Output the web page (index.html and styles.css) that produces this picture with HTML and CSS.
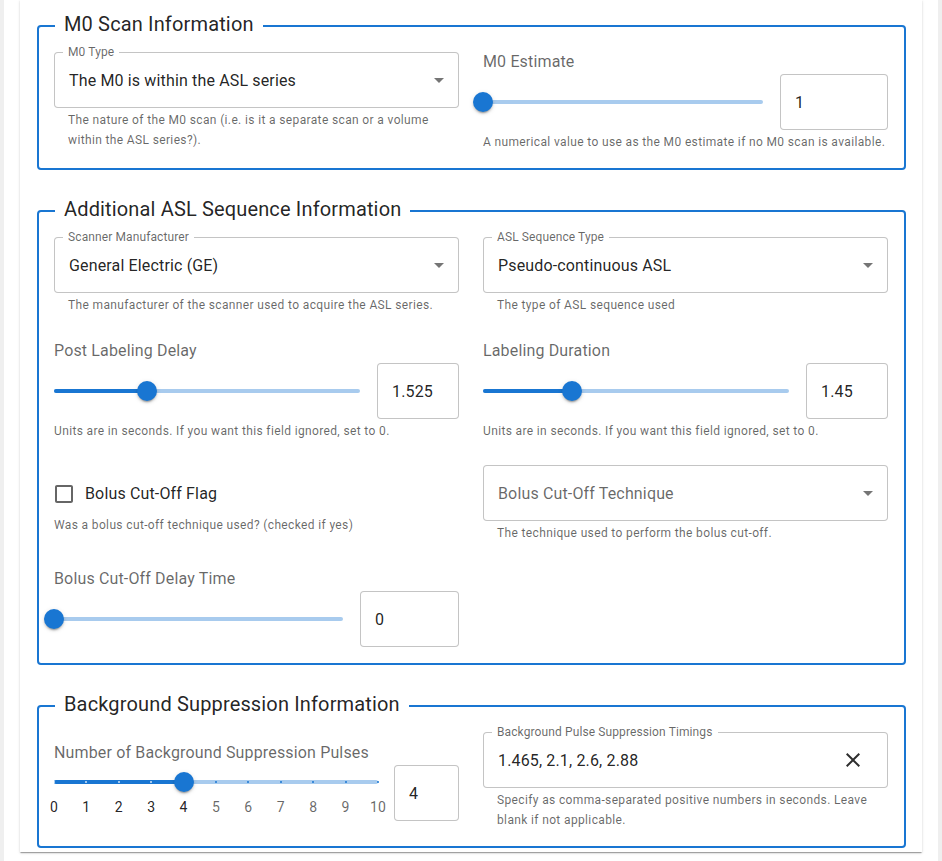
FILE: index.html
```html
<!DOCTYPE html>
<html lang="en">
<head>
<meta charset="utf-8">
<title>ASL Parameters</title>
<link rel="stylesheet" href="styles.css">
</head>
<body>
<div class="viewport">
  <main class="paper">

    <fieldset class="section">
      <legend>M0 Scan Information</legend>
      <div class="grid">
        <div class="col">
          <div class="outlined">
            <span class="float-label">M0 Type</span>
            <span class="value">The M0 is within the ASL series</span>
            <svg class="arrow" viewBox="0 0 24 24"><path d="M7 10l5 5 5-5z"/></svg>
          </div>
          <p class="helper indent">The nature of the M0 scan (i.e. is it a separate scan or a volume within the ASL series?).</p>
        </div>
        <div class="col raise">
          <div class="field-label">M0 Estimate</div>
          <div class="slider-row">
            <div class="slider">
              <div class="rail"></div>
              <div class="track" style="width:0%"></div>
              <div class="thumb" style="left:0%"></div>
            </div>
            <div class="outlined num num-108"><span class="value">1</span></div>
          </div>
          <p class="helper">A numerical value to use as the M0 estimate if no M0 scan is available.</p>
        </div>
      </div>
    </fieldset>

    <fieldset class="section">
      <legend>Additional ASL Sequence Information</legend>
      <div class="grid">
        <div class="col">
          <div class="outlined">
            <span class="float-label">Scanner Manufacturer</span>
            <span class="value">General Electric (GE)</span>
            <svg class="arrow" viewBox="0 0 24 24"><path d="M7 10l5 5 5-5z"/></svg>
          </div>
          <p class="helper indent">The manufacturer of the scanner used to acquire the ASL series.</p>
        </div>
        <div class="col">
          <div class="outlined">
            <span class="float-label">ASL Sequence Type</span>
            <span class="value">Pseudo-continuous ASL</span>
            <svg class="arrow" viewBox="0 0 24 24"><path d="M7 10l5 5 5-5z"/></svg>
          </div>
          <p class="helper indent">The type of ASL sequence used</p>
        </div>

        <div class="col">
          <div class="field-label">Post Labeling Delay</div>
          <div class="slider-row">
            <div class="slider">
              <div class="rail"></div>
              <div class="track" style="width:30.5%"></div>
              <div class="thumb" style="left:30.5%"></div>
            </div>
            <div class="outlined num num-82"><span class="value">1.525</span></div>
          </div>
          <p class="helper">Units are in seconds. If you want this field ignored, set to 0.</p>
        </div>
        <div class="col">
          <div class="field-label">Labeling Duration</div>
          <div class="slider-row">
            <div class="slider">
              <div class="rail"></div>
              <div class="track" style="width:29%"></div>
              <div class="thumb" style="left:29%"></div>
            </div>
            <div class="outlined num num-82"><span class="value">1.45</span></div>
          </div>
          <p class="helper">Units are in seconds. If you want this field ignored, set to 0.</p>
        </div>

        <div class="col check-col">
          <label class="check">
            <span class="check-box">
              <svg viewBox="0 0 24 24"><path d="M19 5v14H5V5h14m0-2H5c-1.11 0-2 .9-2 2v14c0 1.1.89 2 2 2h14c1.1 0 2-.9 2-2V5c0-1.1-.9-2-2-2z"/></svg>
            </span>
            <span class="check-text">Bolus Cut-Off Flag</span>
          </label>
          <p class="helper tight">Was a bolus cut-off technique used? (checked if yes)</p>
        </div>
        <div class="col">
          <div class="outlined">
            <span class="value placeholder">Bolus Cut-Off Technique</span>
            <svg class="arrow" viewBox="0 0 24 24"><path d="M7 10l5 5 5-5z"/></svg>
          </div>
          <p class="helper indent">The technique used to perform the bolus cut-off.</p>
        </div>

        <div class="col">
          <div class="field-label">Bolus Cut-Off Delay Time</div>
          <div class="slider-row">
            <div class="slider">
              <div class="rail"></div>
              <div class="track" style="width:0%"></div>
              <div class="thumb" style="left:0%"></div>
            </div>
            <div class="outlined num num-99"><span class="value">0</span></div>
          </div>
        </div>
      </div>
    </fieldset>

    <fieldset class="section last">
      <legend>Background Suppression Information</legend>
      <div class="grid">
        <div class="col lower">
          <div class="field-label">Number of Background Suppression Pulses</div>
          <div class="slider-row marked-row">
            <div class="slider marked">
              <div class="rail"></div>
              <div class="track" style="width:40%"></div>
              <span class="mark on" style="left:0%"></span>
              <span class="mark on" style="left:10%"></span>
              <span class="mark on" style="left:20%"></span>
              <span class="mark on" style="left:30%"></span>
              <span class="mark" style="left:50%"></span>
              <span class="mark" style="left:60%"></span>
              <span class="mark" style="left:70%"></span>
              <span class="mark" style="left:80%"></span>
              <span class="mark" style="left:90%"></span>
              <span class="mark" style="left:100%"></span>
              <span class="mark-label on" style="left:0%">0</span>
              <span class="mark-label on" style="left:10%">1</span>
              <span class="mark-label on" style="left:20%">2</span>
              <span class="mark-label on" style="left:30%">3</span>
              <span class="mark-label on" style="left:40%">4</span>
              <span class="mark-label" style="left:50%">5</span>
              <span class="mark-label" style="left:60%">6</span>
              <span class="mark-label" style="left:70%">7</span>
              <span class="mark-label" style="left:80%">8</span>
              <span class="mark-label" style="left:90%">9</span>
              <span class="mark-label" style="left:100%">10</span>
              <div class="thumb" style="left:40%"></div>
            </div>
            <div class="outlined num num-65"><span class="value">4</span></div>
          </div>
        </div>
        <div class="col">
          <div class="outlined">
            <span class="float-label">Background Pulse Suppression Timings</span>
            <span class="value">1.465, 2.1, 2.6, 2.88</span>
            <svg class="clear" viewBox="0 0 24 24"><path d="M19 6.41 17.59 5 12 10.59 6.41 5 5 6.41 10.59 12 5 17.59 6.41 19 12 13.41 17.59 19 19 17.59 13.41 12z"/></svg>
          </div>
          <p class="helper indent">Specify as comma-separated positive numbers in seconds. Leave blank if not applicable.</p>
        </div>
      </div>
    </fieldset>

  </main>
</div>
</body>
</html>
```

FILE: styles.css
```css
* { box-sizing: border-box; }

html, body {
  margin: 0;
  padding: 0;
}

body {
  width: 942px;
  height: 861px;
  overflow: hidden;
  background: #ffffff;
  font-family: Roboto, "Noto Sans", "Liberation Sans", sans-serif;
  color: rgba(0, 0, 0, 0.87);
}

.viewport {
  display: flex;
  min-height: 861px;
  padding: 0 16px;
  border-left: 4px solid #efefef;
  border-right: 4px solid #efefef;
  align-items: flex-start;
}

.paper {
  flex: 1;
  background: #ffffff;
  padding: 10px 16px 4px 17px;
  box-shadow: 0 2px 1px -1px rgba(0,0,0,0.2), 0 1px 1px 0 rgba(0,0,0,0.14), 0 1px 3px 0 rgba(0,0,0,0.12);
}

/* Sections */
.section {
  margin: 0 0 25px;
  min-width: 0;
  border: 2px solid #1976d2;
  border-radius: 4px;
  padding: 10px 16px 16px 15px;
}

.section.last { margin-bottom: 0; }

.section legend {
  margin-left: 1px;
  padding: 0 9px 4px;
  font-size: 20px;
  line-height: 28px;
  font-weight: 400;
  letter-spacing: 0.15px;
  color: rgba(0, 0, 0, 0.87);
}

.grid {
  display: grid;
  grid-template-columns: 1fr 1fr;
  column-gap: 24px;
  row-gap: 24px;
}

.col { min-width: 0; }
.col.raise { margin-top: -2px; }
.col.lower { padding-top: 9px; }
.check-col { padding-top: 8px; }

/* Outlined field */
.outlined {
  position: relative;
  height: 56px;
  display: flex;
  align-items: center;
  padding: 0 14px;
  border: 1px solid rgba(0, 0, 0, 0.23);
  border-radius: 4px;
  background: #ffffff;
}

.float-label {
  position: absolute;
  top: -9px;
  left: 8px;
  padding: 0 5px;
  background: #ffffff;
  font-size: 12px;
  line-height: 16px;
  letter-spacing: 0.11px;
  color: rgba(0, 0, 0, 0.6);
  white-space: nowrap;
}

.value {
  flex: 1;
  font-size: 16px;
  line-height: 23px;
  letter-spacing: 0.15px;
  color: rgba(0, 0, 0, 0.87);
  white-space: nowrap;
}

.value.placeholder { color: rgba(0, 0, 0, 0.6); }

.arrow {
  width: 24px;
  height: 24px;
  margin-right: -7px;
  fill: rgba(0, 0, 0, 0.54);
  flex: none;
}

.clear {
  width: 24px;
  height: 24px;
  margin-right: 8px;
  fill: rgba(0, 0, 0, 0.82);
  flex: none;
}

.num { flex: none; }
.num-108 { width: 108px; }
.num-99 { width: 99px; }
.num-82 { width: 82px; }
.num-65 { width: 65px; }

/* Helper text */
.helper {
  margin: 2px 0 0;
  font-size: 12px;
  line-height: 20px;
  letter-spacing: 0.36px;
  color: rgba(0, 0, 0, 0.6);
}

.helper.indent { margin-left: 14px; margin-right: 14px; }
.helper.tight { margin-top: 0; }

.field-label {
  font-size: 16px;
  line-height: 24px;
  letter-spacing: 0.15px;
  color: rgba(0, 0, 0, 0.6);
}

/* Slider */
.slider-row {
  display: flex;
  align-items: center;
  height: 56px;
}

.slider-row.marked-row { align-items: flex-start; }

.slider {
  position: relative;
  flex: 1;
  height: 4px;
  margin-right: 17px;
}

.slider.marked {
  margin-top: 15px;
  margin-right: 16px;
}

.rail {
  position: absolute;
  inset: 0;
  border-radius: 12px;
  background: #1976d2;
  opacity: 0.38;
}

.track {
  position: absolute;
  left: 0;
  top: 0;
  height: 4px;
  border-radius: 12px;
  background: #1976d2;
}

.thumb {
  position: absolute;
  top: 50%;
  width: 20px;
  height: 20px;
  border-radius: 50%;
  background: #1976d2;
  transform: translate(-50%, -50%);
  box-shadow: 0 3px 1px -2px rgba(0,0,0,0.2), 0 2px 2px 0 rgba(0,0,0,0.14), 0 1px 5px 0 rgba(0,0,0,0.12);
}

.mark {
  position: absolute;
  top: 1px;
  width: 2px;
  height: 2px;
  margin-left: -1px;
  border-radius: 1px;
  background: #1976d2;
}

.mark.on { background: rgba(255, 255, 255, 0.8); }

.mark-label {
  position: absolute;
  top: 17px;
  transform: translateX(-50%);
  font-size: 14px;
  line-height: 20px;
  letter-spacing: 0.17px;
  color: rgba(0, 0, 0, 0.6);
  white-space: nowrap;
}

.mark-label.on { color: rgba(0, 0, 0, 0.87); }

/* Checkbox */
.check {
  display: flex;
  align-items: center;
  margin-left: -11px;
  height: 42px;
}

.check-box {
  width: 42px;
  height: 42px;
  padding: 9px;
  flex: none;
}

.check-box svg {
  display: block;
  width: 24px;
  height: 24px;
  fill: rgba(0, 0, 0, 0.6);
}

.check-text {
  font-size: 16px;
  line-height: 24px;
  letter-spacing: 0.15px;
  color: rgba(0, 0, 0, 0.87);
}
```
